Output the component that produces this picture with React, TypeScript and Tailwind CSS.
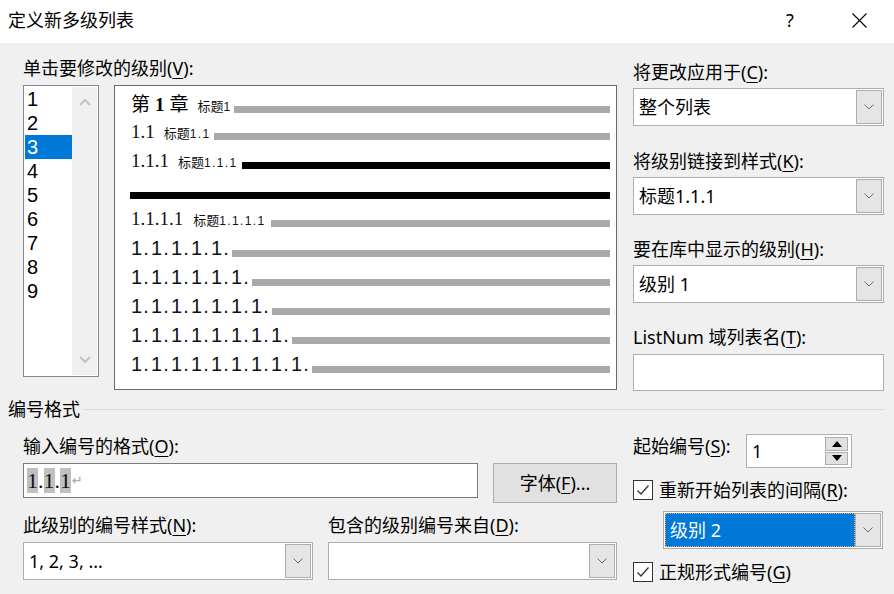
import React from 'react';

// ─── Fonts ──────────────────────────────────────────────────────────
// UI text uses Noto Sans with the CJK face as fallback; preview numbers use
// Liberation Serif / Sans with fixed cells to mimic half-width glyphs.

const LEVELS = ['1', '2', '3', '4', '5', '6', '7', '8', '9'];
const SELECTED_LEVEL = '3';

// ─── Small pieces ───────────────────────────────────────────────────

function Key({ k }: { k: string }) {
  return (
    <>
      (<span className="underline underline-offset-[3px] decoration-1">{k}</span>)
    </>
  );
}

function Fixed({ text, cell }: { text: string; cell: string }) {
  return (
    <span className="inline-block whitespace-nowrap">
      {text.split('').map((c, i) => (
        <span key={i} className={`inline-block text-center ${cell}`}>
          {c}
        </span>
      ))}
    </span>
  );
}

function Chevron() {
  return (
    <svg width="10" height="6" viewBox="0 0 10 6">
      <polyline points="0.5,0.5 5,5 9.5,0.5" fill="none" stroke="#6d6d6d" strokeWidth="1" />
    </svg>
  );
}

function Combo({
  value,
  className,
  selected,
}: {
  value?: string;
  className: string;
  selected?: boolean;
}) {
  return (
    <div className={`flex border border-[#adadad] bg-white p-[1px] ${className}`}>
      {selected ? (
        <div className="flex-1 flex items-center bg-[#0078d7] border border-dotted border-[#f3a55a] pl-[4px] text-white leading-[24px]">
          {value}
        </div>
      ) : (
        <div className="flex-1 flex items-center pl-[4px] leading-[24px]">{value}</div>
      )}
      <div className="w-[26px] border border-[#adadad] bg-[#e5e5e5] flex items-center justify-center">
        <Chevron />
      </div>
    </div>
  );
}

function Checkbox({ children }: { children: React.ReactNode }) {
  return (
    <div className="flex items-center h-[20px]">
      <div className="w-[20px] h-[20px] border border-[#333333] bg-white flex items-center justify-center">
        <svg width="16" height="16" viewBox="0 0 16 16">
          <polyline points="2.5,8.5 6,12 13.5,3.5" fill="none" stroke="#333333" strokeWidth="1.3" />
        </svg>
      </div>
      <span className="ml-[6px] leading-[24px]">{children}</span>
    </div>
  );
}

function Bar({ black, className = '' }: { black?: boolean; className?: string }) {
  return (
    <div
      className={`flex-1 h-[7px] translate-y-[2px] ${black ? 'bg-black' : 'bg-[#a9a9a9]'} ${className}`}
    />
  );
}

function SmallLabel({ digits, className = '' }: { digits: string; className?: string }) {
  return (
    <span className={`text-[13px] leading-[22px] text-[#111111] ${className}`}>
      标题
      <span className="font-['Liberation_Sans',sans-serif] text-[12px]">
        <Fixed text={digits} cell="w-[6.4px]" />
      </span>
    </span>
  );
}

function SerifNum({ text }: { text: string }) {
  return (
    <span className="font-['Liberation_Serif',serif] text-[19px] leading-[22px] text-[#111111]">
      {text}
    </span>
  );
}

function DotsRow({ count }: { count: number }) {
  return (
    <div className="flex items-baseline h-[29px]">
      <span className="font-['Liberation_Sans',sans-serif] text-[20px] leading-[22px] text-[#111111]">
        <Fixed text={'1.'.repeat(count)} cell="w-[10px]" />
      </span>
      <Bar className="ml-[1px]" />
    </div>
  );
}

// ─── Component ──────────────────────────────────────────────────────

export default function App() {
  return (
    <div className="w-[894px] h-[594px] overflow-hidden bg-[#f0f0f0] text-black text-[18px] font-['Noto_Sans','Noto_Sans_CJK_SC',sans-serif]">
      {/* Title bar */}
      <div className="h-[43px] bg-white flex items-center pl-[8px] pr-[27px]">
        <span className="flex-1 leading-[24px] pb-[3px]">定义新多级列表</span>
        <span className="w-[20px] text-center leading-[24px] pb-[3px] mr-[52px]">?</span>
        <svg width="15" height="15" viewBox="0 0 15 15" className="mb-[3px]">
          <line x1="0.5" y1="0.5" x2="14.5" y2="14.5" stroke="#000" strokeWidth="1.1" />
          <line x1="14.5" y1="0.5" x2="0.5" y2="14.5" stroke="#000" strokeWidth="1.1" />
        </svg>
      </div>

      {/* Top: levels, preview, apply options */}
      <div className="flex pl-[23px] pr-[10px] pt-[13px] gap-[16px]">
        <div className="w-[594px]">
          <div className="leading-[24px]">
            单击要修改的级别<Key k="V" />:
          </div>
          <div className="flex items-start gap-[15px] mt-[5px]">
            {/* Level list */}
            <div className="w-[76px] h-[292px] border border-[#828790] bg-white flex p-[1px]">
              <div className="w-[47px] flex flex-col">
                {LEVELS.map((l) => (
                  <div
                    key={l}
                    className={`h-[24px] leading-[24px] pl-[2px] text-[20px] font-['Liberation_Sans',sans-serif] ${
                      l === SELECTED_LEVEL ? 'bg-[#0078d7] text-white' : ''
                    }`}
                  >
                    {l}
                  </div>
                ))}
              </div>
              <div className="w-[25px] bg-[#f0f0f0] flex flex-col items-center justify-between py-[11px]">
                <svg width="12" height="8" viewBox="0 0 12 8">
                  <polyline points="1,7 6,2 11,7" fill="none" stroke="#c2c2c2" strokeWidth="2" />
                </svg>
                <svg width="12" height="8" viewBox="0 0 12 8">
                  <polyline points="1,1 6,6 11,1" fill="none" stroke="#c2c2c2" strokeWidth="2" />
                </svg>
              </div>
            </div>

            {/* Preview */}
            <div className="w-[503px] h-[305px] border border-[#696969] bg-white pt-[6px] pl-[16px] pr-[6px] flex flex-col">
              <div className="flex items-baseline h-[29px]">
                <span className="text-[19px] leading-[22px] font-['Noto_Sans_CJK_SC',sans-serif]">第</span>
                <span className="font-['Liberation_Serif',serif] font-bold text-[19px] leading-[22px] mx-[5px]">
                  1
                </span>
                <span className="text-[19px] leading-[22px] font-['Noto_Sans_CJK_SC',sans-serif]">章</span>
                <SmallLabel digits="1" className="ml-[9px]" />
                <Bar className="ml-[4px]" />
              </div>
              <div className="flex items-baseline h-[29px]">
                <SerifNum text="1.1" />
                <SmallLabel digits="1.1" className="ml-[9px]" />
                <Bar className="ml-[5px]" />
              </div>
              <div className="flex items-baseline h-[29px]">
                <SerifNum text="1.1.1" />
                <SmallLabel digits="1.1.1" className="ml-[9px]" />
                <Bar black className="ml-[6px]" />
              </div>
              <div className="flex h-[29px]">
                <div className="flex-1 h-[7px] mt-[13px] bg-black -ml-[1px]" />
              </div>
              <div className="flex items-baseline h-[29px]">
                <SerifNum text="1.1.1.1" />
                <SmallLabel digits="1.1.1.1" className="ml-[10px]" />
                <Bar className="ml-[7px]" />
              </div>
              <DotsRow count={5} />
              <DotsRow count={6} />
              <DotsRow count={7} />
              <DotsRow count={8} />
              <DotsRow count={9} />
            </div>
          </div>
        </div>

        <div className="w-[251px] pt-[4px]">
          <div className="leading-[24px]">
            将更改应用于<Key k="C" />:
          </div>
          <Combo value="整个列表" className="mt-[4px] h-[38px]" />
          <div className="leading-[24px] mt-[23px]">
            将级别链接到样式<Key k="K" />:
          </div>
          <Combo value="标题1.1.1" className="mt-[4px] h-[38px]" />
          <div className="leading-[24px] mt-[22px]">
            要在库中显示的级别<Key k="H" />:
          </div>
          <Combo value="级别 1" className="mt-[4px] h-[38px]" />
          <div className="leading-[24px] mt-[22px]">
            ListNum 域列表名<Key k="T" />:
          </div>
          <div className="mt-[5px] h-[37px] border border-[#adadad] bg-white" />
        </div>
      </div>

      {/* Group header */}
      <div className="flex items-center h-[24px] mt-[6px] pl-[8px] pr-[10px]">
        <span className="leading-[24px]">编号格式</span>
        <div className="flex-1 h-px bg-[#dadada] ml-[4px]" />
      </div>

      {/* Bottom: number format */}
      <div className="flex pl-[23px] pr-[10px] pt-[13px] gap-[16px]">
        <div className="w-[594px]">
          <div className="leading-[24px]">
            输入编号的格式<Key k="O" />:
          </div>
          <div className="flex items-start gap-[15px] mt-[5px]">
            <div className="w-[455px] h-[35px] border border-[#7a7a7a] bg-white flex items-center pl-[3px]">
              <span className="font-['Liberation_Serif',serif] text-[22px] leading-[22px] text-[#111111]">
                <span className="bg-[#c0c0c0]">1</span>.<span className="bg-[#c0c0c0]">1</span>.
                <span className="bg-[#c0c0c0]">1</span>
              </span>
              <span className="text-[13px] text-[#a0a0a0] ml-[1px] font-['DejaVu_Sans',sans-serif]">↵</span>
            </div>
            <button
              type="button"
              className="w-[124px] h-[40px] border border-[#adadad] bg-[#e1e1e1] leading-[24px] text-center"
            >
              字体<Key k="F" />...
            </button>
          </div>
          <div className="grid grid-cols-[290px_289px] gap-x-[15px] mt-[10px]">
            <div>
              <div className="leading-[24px]">
                此级别的编号样式<Key k="N" />:
              </div>
              <Combo value="1, 2, 3, ..." className="mt-[5px] h-[38px]" />
            </div>
            <div>
              <div className="leading-[24px]">
                包含的级别编号来自<Key k="D" />:
              </div>
              <Combo className="mt-[5px] h-[38px]" />
            </div>
          </div>
        </div>

        <div className="w-[251px]">
          <div className="flex items-start">
            <span className="w-[113px] leading-[24px]">
              起始编号<Key k="S" />:
            </span>
            <div className="w-[106px] h-[34px] border border-[#adadad] bg-white flex p-[2px] pr-[3px]">
              <span className="flex-1 pl-[3px] leading-[28px]">1</span>
              <div className="w-[23px] flex flex-col gap-[1px]">
                <div className="flex-1 border border-[#adadad] bg-[#e1e1e1] flex items-center justify-center">
                  <svg width="10" height="6" viewBox="0 0 10 6">
                    <polygon points="0,6 5,0 10,6" fill="#000" />
                  </svg>
                </div>
                <div className="flex-1 border border-[#adadad] bg-[#e1e1e1] flex items-center justify-center">
                  <svg width="10" height="6" viewBox="0 0 10 6">
                    <polygon points="0,0 10,0 5,6" fill="#000" />
                  </svg>
                </div>
              </div>
            </div>
          </div>
          <div className="mt-[12px]">
            <Checkbox>
              重新开始列表的间隔<Key k="R" />:
            </Checkbox>
          </div>
          <Combo value="级别 2" selected className="mt-[11px] ml-[30px] w-[220px] h-[38px]" />
          <div className="mt-[13px]">
            <Checkbox>
              正规形式编号<Key k="G" />
            </Checkbox>
          </div>
        </div>
      </div>
    </div>
  );
}
